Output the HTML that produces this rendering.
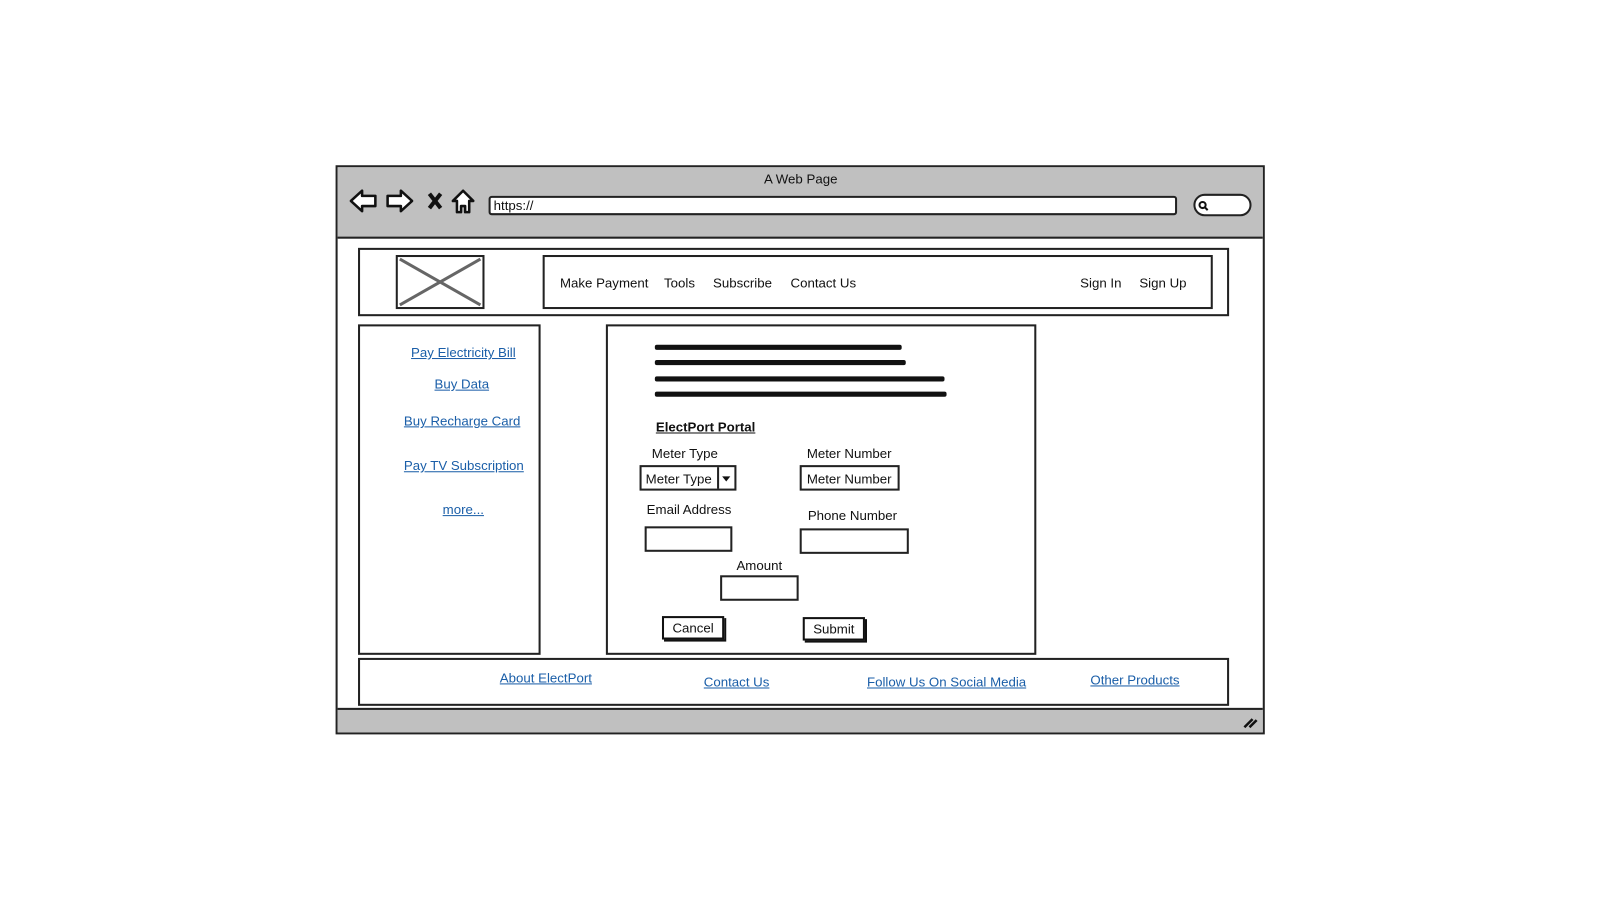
<!DOCTYPE html>
<html><head><style>
body{margin:0;width:1600px;height:900px;background:#fff;position:relative;font-family:"Liberation Sans",sans-serif;font-size:13px;color:#111;overflow:hidden}
#w{position:absolute;left:0;top:0;width:1600px;height:900px;transform:scale(1.02);transform-origin:0 0}
.a{position:absolute}
.b{position:absolute;border:2px solid #222;box-sizing:border-box;background:#fff}
.l{position:absolute;color:#1a5ea8;text-decoration:underline;white-space:nowrap}
.t{position:absolute;white-space:nowrap}
.btn{position:absolute;border:2px solid #111;box-sizing:border-box;background:#fff;box-shadow:2px 2px 0 #111;text-align:center}
.s{position:absolute;height:5px;background:#111;border-radius:2px}
</style></head><body><div id="w">
<div class="b" style="left:329px;top:162px;width:911px;height:558px;background:#fff"></div>
<div class="a" style="left:331px;top:164px;width:907px;height:68px;background:#c0c0c0;border-bottom:2px solid #222"></div>
<div class="a" style="left:331px;top:694px;width:907px;height:22px;background:#c0c0c0;border-top:2px solid #222"></div>
<div class="t" style="left:749px;top:168px">A Web Page</div>
<svg class="a" style="left:340px;top:182px" width="130" height="30" viewBox="0 0 130 30">
<path d="M4 15 L15 5 L15 10 L28 10 L28 20 L15 20 L15 25 Z" fill="#fff" stroke="#111" stroke-width="2.5" stroke-linejoin="round"/>
<path d="M64 15 L53 5 L53 10 L40 10 L40 20 L53 20 L53 25 Z" fill="#fff" stroke="#111" stroke-width="2.5" stroke-linejoin="round"/>
<path d="M81 8 L92 22 M92 8 L81 22" stroke="#111" stroke-width="4"/>
<path d="M104 15 L114 5 L124 15 L120 15 L120 26 L116 26 L116 20 L112 20 L112 26 L108 26 L108 15 Z" fill="#fff" stroke="#111" stroke-width="2.5" stroke-linejoin="round"/>
</svg>
<div class="b" style="left:479px;top:192px;width:675px;height:19px;border-radius:3px"></div>
<div class="t" style="left:484px;top:194px">https://</div>
<div class="b" style="left:1170px;top:190px;width:57px;height:22px;border-radius:11px"></div>
<svg class="a" style="left:1174px;top:196px" width="12" height="12"><circle cx="5" cy="5" r="3" fill="none" stroke="#111" stroke-width="2"/><path d="M7 7 L10 10" stroke="#111" stroke-width="2"/></svg>
<svg class="a" style="left:1218px;top:701px" width="16" height="14"><path d="M2 12 L10 4 M7 12 L14 5" stroke="#111" stroke-width="2.5"/></svg>

<div class="b" style="left:351px;top:243px;width:854px;height:67px"></div>
<div class="b" style="left:388px;top:250px;width:87px;height:53px"></div>
<svg class="a" style="left:390px;top:252px" width="83" height="49"><path d="M2 2 L81 47 M81 2 L2 47" stroke="#666" stroke-width="3"/></svg>
<div class="b" style="left:532px;top:250px;width:657px;height:53px"></div>
<div class="t" style="left:549px;top:270px">Make Payment</div>
<div class="t" style="left:651px;top:270px">Tools</div>
<div class="t" style="left:699px;top:270px">Subscribe</div>
<div class="t" style="left:775px;top:270px">Contact Us</div>
<div class="t" style="left:1059px;top:270px">Sign In</div>
<div class="t" style="left:1117px;top:270px">Sign Up</div>

<div class="b" style="left:351px;top:318px;width:179px;height:324px"></div>
<div class="l" style="left:403px;top:338px">Pay Electricity Bill</div>
<div class="l" style="left:426px;top:369px">Buy Data</div>
<div class="l" style="left:396px;top:405px">Buy Recharge Card</div>
<div class="l" style="left:396px;top:449px">Pay TV Subscription</div>
<div class="l" style="left:434px;top:492px">more...</div>

<div class="b" style="left:594px;top:318px;width:422px;height:324px"></div>
<div class="s" style="left:642px;top:338px;width:242px"></div>
<div class="s" style="left:642px;top:353px;width:246px"></div>
<div class="s" style="left:642px;top:369px;width:284px"></div>
<div class="s" style="left:642px;top:384px;width:286px"></div>
<div class="t" style="left:643px;top:411px;font-weight:bold;text-decoration:underline">ElectPort Portal</div>
<div class="t" style="left:639px;top:437px">Meter Type</div>
<div class="t" style="left:791px;top:437px">Meter Number</div>
<div class="b" style="left:627px;top:456px;width:95px;height:25px"></div>
<div class="t" style="left:633px;top:462px">Meter Type</div>
<div class="a" style="left:703px;top:458px;width:2px;height:21px;background:#222"></div>
<div class="a" style="left:708px;top:467px;border-left:4px solid transparent;border-right:4px solid transparent;border-top:5px solid #111"></div>
<div class="b" style="left:784px;top:456px;width:98px;height:25px"></div>
<div class="t" style="left:791px;top:462px">Meter Number</div>
<div class="t" style="left:634px;top:492px">Email Address</div>
<div class="t" style="left:792px;top:498px">Phone Number</div>
<div class="b" style="left:632px;top:516px;width:86px;height:25px"></div>
<div class="b" style="left:784px;top:518px;width:107px;height:25px"></div>
<div class="t" style="left:722px;top:547px">Amount</div>
<div class="b" style="left:706px;top:564px;width:77px;height:25px"></div>
<div class="btn" style="left:649px;top:604px;width:61px;height:23px;line-height:20px">Cancel</div>
<div class="btn" style="left:787px;top:605px;width:61px;height:23px;line-height:20px">Submit</div>

<div class="b" style="left:351px;top:645px;width:854px;height:47px"></div>
<div class="l" style="left:490px;top:657px">About ElectPort</div>
<div class="l" style="left:690px;top:661px">Contact Us</div>
<div class="l" style="left:850px;top:661px">Follow Us On Social Media</div>
<div class="l" style="left:1069px;top:659px">Other Products</div>
</div></body></html>
